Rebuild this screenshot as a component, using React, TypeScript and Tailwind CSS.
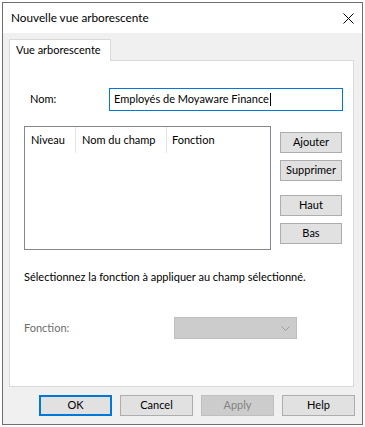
import React from 'react'

const Btn = ({ label, className = '' }: { label: string; className?: string }) => (
    <div className={`flex items-center justify-center bg-[#e1e1e1] border border-[#adadad] text-black ${className}`}>
        {label}
    </div>
)

const App = () => {
    return (
        <div className="w-[365px] h-[427px] bg-white overflow-hidden text-[11px] text-black" style={{ fontFamily: 'Lato, "Noto Sans", sans-serif' }}>
            <div className="ml-[2px] mt-[2px] w-[361px] h-[423px] border border-[#6f6f6f] bg-[#f0f0f0] flex flex-col">
                {/* title bar */}
                <div className="h-[30px] bg-white flex items-center justify-between pl-[8px] pr-[8px]">
                    <span className="leading-none text-[11.75px]">Nouvelle vue arborescente</span>
                    <svg width="11" height="11" viewBox="0 0 11 11">
                        <path d="M0.5 0.5 L10.5 10.5 M10.5 0.5 L0.5 10.5" stroke="#000" strokeWidth="1" />
                    </svg>
                </div>

                <div className="px-[6px] pt-[6px]">
                    <div className="flex">
                        <div className="relative z-10 -mb-px w-[102px] h-[22px] bg-white border border-b-0 border-[#d9d9d9] flex items-center pl-[6px]">
                            Vue arborescente
                        </div>
                    </div>
                    <div className="w-[345px] h-[327px] bg-white border border-[#d9d9d9]">
                        {/* Nom */}
                        <div className="mt-[27px] flex items-center h-[23px]">
                            <span className="w-[99px] pl-[20px]">Nom:</span>
                            <div className="w-[234px] h-[23px] border border-[#0078d7] flex items-center pl-[4px]">
                                <span>Employés de Moyaware Finance</span>
                                <span className="w-px h-[13px] bg-black ml-px"></span>
                            </div>
                        </div>

                        {/* list + buttons */}
                        <div className="mt-[15px] ml-[14px] flex">
                            <div className="w-[247px] h-[124px] border border-[#828790] bg-white">
                                <div className="flex h-[26px] items-center">
                                    <div className="w-[51px] h-full pl-[6px] flex items-center border-r border-[#e5e5e5]">Niveau</div>
                                    <div className="w-[91px] h-full pl-[6px] flex items-center border-r border-[#e5e5e5]">Nom du champ</div>
                                    <div className="pl-[5px] h-full flex items-center">Fonction</div>
                                </div>
                            </div>
                            <div className="ml-[9px] flex flex-col pt-[6px]">
                                <Btn label="Ajouter" className="w-[62px] h-[21px]" />
                                <Btn label="Supprimer" className="w-[62px] h-[21px] mt-[7px]" />
                                <Btn label="Haut" className="w-[62px] h-[21px] mt-[14px]" />
                                <Btn label="Bas" className="w-[62px] h-[21px] mt-[7px]" />
                            </div>
                        </div>

                        <div className="mt-[19px] ml-[14px] leading-[16px]">
                            Sélectionnez la fonction à appliquer au champ sélectionné.
                        </div>

                        {/* Fonction */}
                        <div className="mt-[32px] ml-[14px] flex items-center h-[22px]">
                            <span className="w-[150px] text-[#6d6d6d]">Fonction:</span>
                            <div className="w-[123px] h-[22px] bg-[#cccccc] border border-[#bfbfbf] flex items-center justify-end pr-[6px]">
                                <svg width="9" height="5" viewBox="0 0 9 5">
                                    <path d="M0.5 0.5 L4.5 4.5 L8.5 0.5" stroke="#9a9a9a" strokeWidth="1" fill="none" />
                                </svg>
                            </div>
                        </div>
                    </div>
                </div>

                {/* bottom buttons */}
                <div className="mt-[8px] flex pl-[36px] gap-[8px]">
                    <div className="w-[73px] h-[21px] flex items-center justify-center bg-[#e1e1e1] border-2 border-[#0078d7]">OK</div>
                    <Btn label="Cancel" className="w-[73px] h-[21px]" />
                    <div className="w-[73px] h-[21px] flex items-center justify-center bg-[#cccccc] border border-[#bfbfbf] text-[#838383]">Apply</div>
                    <Btn label="Help" className="w-[73px] h-[21px]" />
                </div>
            </div>
        </div>
    )
}

export default App
